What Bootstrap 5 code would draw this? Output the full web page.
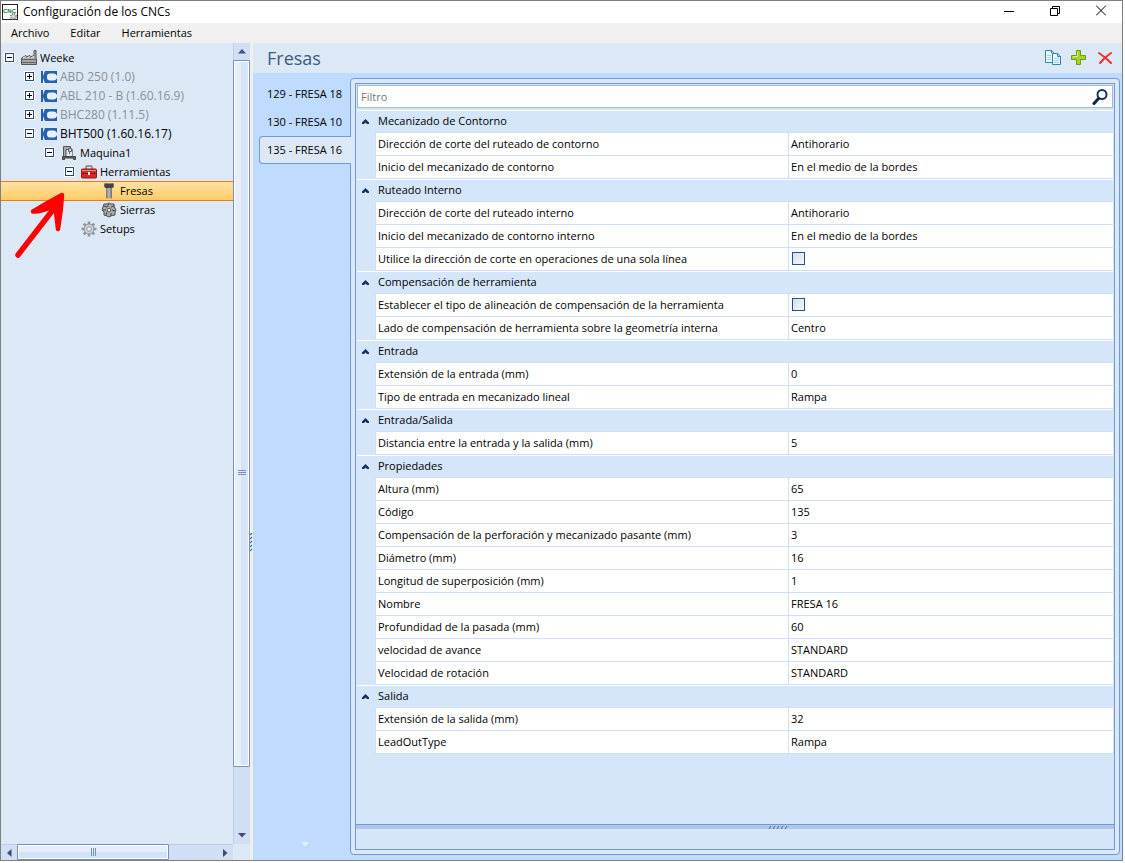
<!DOCTYPE html>
<html lang="es">
<head>
<meta charset="utf-8">
<meta name="viewport" content="width=device-width, initial-scale=1">
<title>Configuración de los CNCs</title>
<link href="https://cdn.jsdelivr.net/npm/bootstrap@5.3.0/dist/css/bootstrap.min.css" rel="stylesheet">
<style>
html, body { height: 100%; }
body { font-family: "Open Sans", "Noto Sans", sans-serif; font-size: 11px; line-height: 16px; color: #000; background: #fff; padding: 0 2px 2px 0; overflow: hidden; }
button { font: inherit; color: inherit; background: none; border: 0; padding: 0; }
svg { display: block; flex: none; }
.app-window { border: 1px solid #7f7f7f; }
.title-row { height: 22px; padding: 0 0 0 1px; gap: 5px; }
.title-row h1 { font-size: 12px; line-height: 16px; font-weight: 400; }
.win-btn { width: 46px; height: 18px; display: flex; align-items: center; justify-content: center; }
.win-btns { margin-right: -2px; }
.menu-row { height: 20px; background: #f0f0f0; padding-left: 10px; gap: 21px; }
.menu-row a { color: #000; text-decoration: none; }
.side { width: 249px; background: #dde8f6; display: grid; grid-template-columns: minmax(0, 1fr) 17px; grid-template-rows: minmax(0, 1fr) 16px; }
.tree { padding-top: 5px; }
.tree li { height: 19px; display: flex; align-items: center; padding-left: 3px; white-space: nowrap; }
.tree .lv1 { padding-left: 23px; font-size: 12px; }
.tree .lv2 { padding-left: 43px; }
.tree .lv3 { padding-left: 63px; }
.tree .lv4 { padding-left: 83px; }
.tree .expander, .tree .spacer { width: 11px; height: 11px; margin-right: 6px; }
.tree .node { margin-left: 3px; }
.tree .off { color: #8b8f96; }
.tree .chosen { height: 20px; margin-bottom: -1px; border: 1px solid #f07818; border-width: 1px 0; background: linear-gradient(#ffe3a3, #ffcb62); }
.pointer-arrow { left: 9px; top: 145px; }
.v-track { background: #d0dff3; border-left: 1px solid #bccfe9; }
.h-track { background: #d0dff3; border-top: 1px solid #bccfe9; }
.v-track button, .h-track button { display: flex; align-items: center; justify-content: center; }
.v-track > button { height: 17px; }
.h-track > button { width: 16px; }
.v-thumb { border: 1px solid #7590ba; box-shadow: inset 0 0 0 1px #fff; background: linear-gradient(90deg, #e7eefb 45%, #d3e2f4 45%, #dbe8f8); margin-left: -1px; flex: 706 0 0; border-radius: 1px; }
.v-thumb svg { margin-top: 118px; }
.v-rest { flex: 60 0 0; }
.h-thumb { border: 1px solid #7590ba; box-shadow: inset 0 0 0 1px #fff; background: linear-gradient(#e7eefb 50%, #d3e2f4 50%); flex: 152 0 0; margin-top: -1px; border-radius: 1px; }
.h-rest { flex: 48 0 0; }
.side-split { width: 3px; background: #efefef; padding-top: 180px; }
.work { background: #bfdbff; min-width: 0; }
.work-head { height: 30px; background: #dde8f6; padding: 0 9px 0 14px; }
.work-head h2 { font-size: 18px; line-height: 24px; font-weight: 400; color: #3b5a82; }
.work-body { padding: 5px 2px 5px 6px; min-height: 0; }
.tool-tabs { width: 92px; margin-right: -1px; z-index: 1; padding-top: 2px; }
.tool-tabs button { height: 28px; text-align: left; padding-left: 7px; border: 1px solid transparent; border-right: 0; white-space: nowrap; }
.tool-tabs .active { background: #dde8f6; border-color: #6f9ad6; border-radius: 4px 0 0 4px; }
.pane { background: #dde8f6; border: 1px solid #6f9ad6; border-radius: 4px; padding: 4px; min-width: 0; }
.pane-inner { border: 1px solid #6f9ad6; background: #d5e6fb; }
.filter-box { height: 23px; margin: 1px 1px 2px; background: #fff; border: 1px solid #9cbbe8; }
.filter-box input { border: 0; outline: 0; background: none; padding: 0 3px; min-width: 0; color: #000; }
.filter-box input::placeholder { color: #777; opacity: 1; }
.props { margin: 0 1px; table-layout: fixed; width: calc(100% - 2px); border-collapse: separate; border-spacing: 0; }
.props th, .props td { height: 23px; padding: 0 3px 0 2px; font-weight: 400; background: #fff; border-bottom: 1px solid #cfe0f5; white-space: nowrap; vertical-align: middle; line-height: 16px; color: #000; }
.props .gutter { background: #d5e6fb; border-bottom: 0; border-right: 1px solid #cfe0f5; }
.props td:last-child { border-left: 1px solid #cfe0f5; }
.props .cat th, .props .cat td { background: #d5e6fb; border-top: 1px solid #fff; border-right: 0; border-bottom: 1px solid #cfe0f5; }
.props .cat td { padding: 0 0 1px 4px; border-bottom: 0; }
.props .cat th { padding: 0 3px 1px 2px; }
.props input { appearance: none; width: 13px; height: 13px; border: 1px solid #1e558f; background: linear-gradient(135deg, #d8dce6, #f6f8fc); display: block; margin: 0 0 1px 1px; }
.pane-split { height: 5px; background: #b1c6e7; border-top: 1px solid #6f9ad6; padding-left: 86px; }
.pane-note { height: 20px; }
</style>
</head>
<body>
<svg width="0" height="0" class="position-absolute" aria-hidden="true">
  <defs>
    <linearGradient id="steel"><stop offset="0" stop-color="#555"/><stop offset=".5" stop-color="#bbb"/><stop offset="1" stop-color="#444"/></linearGradient>
  </defs>
  <symbol id="minus" viewBox="0 0 11 11"><rect x=".5" y=".5" width="10" height="10" fill="#fff" stroke="#fff"/><rect x="1.500" y="1.500" width="8" height="8" fill="#fff" stroke="#2b4878"/><path d="M3 5.500h5" stroke="#000"/></symbol>
  <symbol id="plus" viewBox="0 0 11 11"><rect x=".5" y=".5" width="10" height="10" fill="#fff" stroke="#fff"/><rect x="1.500" y="1.500" width="8" height="8" fill="#fff" stroke="#2b4878"/><path d="M3 5.500h5M5.500 3v5" stroke="#000"/></symbol>
  <symbol id="brand" viewBox="0 0 16 14"><path d="M0 1h2v5l2-5h12v12H4L2 8v5H0z" fill="#2762ad"/><rect x="6" y="3.500" width="9.500" height="7" rx="3" fill="#e8f0fa"/><path d="M14 5.500h2v3h-2z" fill="#e8f0fa"/></symbol>
  <symbol id="up" viewBox="0 0 9 6"><path d="M1 5V3.500L4.500 0 8 3.500V5H6L4.500 3.500 3 5z" fill="#12305f"/></symbol>
  <symbol id="gear" viewBox="0 0 16 16"><path d="M8 .5v15M.5 8h15M2.700 2.700l10.600 10.600M13.300 2.700L2.700 13.300" stroke="#8f949b" stroke-width="2.600"/><circle cx="8" cy="8" r="5" fill="#cfd2d6" stroke="#8f949b"/><circle cx="8" cy="8" r="2.300" fill="#eef2f6" stroke="#8f949b"/></symbol>
</svg>

<div class="app-window d-flex flex-column h-100">
  <header class="title-row d-flex align-items-center">
    <svg width="16" height="17" viewBox="0 0 16 17"><rect x=".5" y=".5" width="15" height="15" fill="#fff" stroke="#222"/><text x="1" y="9" font-family="Liberation Sans" font-weight="bold" font-size="6" fill="#147a32">CNC</text><circle cx="11.500" cy="12.500" r="2.500" fill="#ddd" stroke="#777" stroke-dasharray="1 1" stroke-width="2"/></svg>
    <h1 class="mb-0 me-auto">Configuración de los CNCs</h1>
    <div class="win-btns d-flex align-self-start">
    <button class="win-btn" aria-label="Minimizar"><svg width="10" height="11"><path d="M0 6.500h10" stroke="#000"/></svg></button>
    <button class="win-btn" aria-label="Restaurar"><svg width="10" height="11" fill="none" stroke="#000"><path d="M.5 3.500h7v7h-7zM2.500 3V1.500h7v7H8"/></svg></button>
    <button class="win-btn" aria-label="Cerrar"><svg width="10" height="11" stroke="#000"><path d="M0 .5l10 10M10 .5l-10 10"/></svg></button>
    </div>
  </header>
  <nav class="menu-row d-flex align-items-center" aria-label="Principal"><a href="#">Archivo</a><a href="#">Editar</a><a href="#">Herramientas</a></nav>

  <main class="d-flex flex-grow-1 overflow-hidden">
    <aside class="side position-relative flex-shrink-0">
      <ul class="tree list-unstyled mb-0 overflow-hidden">
        <li><button class="expander" aria-label="Contraer"><svg width="11" height="11"><use href="#minus"/></svg></button>
          <svg width="16" height="16" viewBox="0 0 16 16"><path d="M13 .5h2V8l.5 1v5.500H.5V8L5 5.500V7l4-1.500V7l4-1.500z" fill="#a6a6a6" stroke="#555"/><path d="M1 9.500h14M1 12.500h14" stroke="#666"/><path d="M2 8l3-1.500M6 8l3-1.500M10 8l3-1.500" stroke="#eee"/></svg><span class="node">Weeke</span></li>
        <li class="lv1 off"><button class="expander" aria-label="Expandir"><svg width="11" height="11"><use href="#plus"/></svg></button><svg width="16" height="14"><use href="#brand"/></svg><span class="node">ABD 250 (1.0)</span></li>
        <li class="lv1 off"><button class="expander" aria-label="Expandir"><svg width="11" height="11"><use href="#plus"/></svg></button><svg width="16" height="14"><use href="#brand"/></svg><span class="node">ABL 210 - B (1.60.16.9)</span></li>
        <li class="lv1 off"><button class="expander" aria-label="Expandir"><svg width="11" height="11"><use href="#plus"/></svg></button><svg width="16" height="14"><use href="#brand"/></svg><span class="node">BHC280 (1.11.5)</span></li>
        <li class="lv1"><button class="expander" aria-label="Contraer"><svg width="11" height="11"><use href="#minus"/></svg></button><svg width="16" height="14"><use href="#brand"/></svg><span class="node">BHT500 (1.60.16.17)</span></li>
        <li class="lv2"><button class="expander" aria-label="Contraer"><svg width="11" height="11"><use href="#minus"/></svg></button>
          <svg width="16" height="16" viewBox="0 0 16 16"><path d="M2.500 1.500h7v3H5v7H2.500z" fill="#aaa" stroke="#555"/><path d="M8.500 5v4" stroke="#666"/><path d="M7.500 3.500h3v3h-3z" fill="#ccc" stroke="#666"/><path d="M11.500 4v7" stroke="#888"/><path d="M1.500 14.500v-3h13v3h-2V13h-9v1.500z" fill="#666" stroke="#444"/></svg><span class="node">Maquina1</span></li>
        <li class="lv3"><button class="expander" aria-label="Contraer"><svg width="11" height="11"><use href="#minus"/></svg></button>
          <svg width="16" height="16" viewBox="0 0 16 16"><path d="M5 5V3q0-1 1-1h4q1 0 1 1v2" fill="none" stroke="#777" stroke-width="1.400"/><rect x=".5" y="5" width="15" height="9" rx="1" fill="#d42a2a" stroke="#a01414"/><path d="M1 6.500h14" stroke="#f08a80"/><path d="M1 9.500h14" stroke="#8c1010"/><path d="M7 8h2v3H7z" fill="#eee"/></svg><span class="node">Herramientas</span></li>
        <li class="lv4 chosen"><span class="spacer"></span><svg width="16" height="16" viewBox="0 0 16 16"><path d="M3.500 .5h9V4l-1.500 1v10.500H5V5L3.500 4z" fill="url(#steel)"/><path d="M3.500 .5h9V4l-1 1h-7l-1-1z" fill="#444"/></svg><span class="node">Fresas</span></li>
        <li class="lv4"><span class="spacer"></span><svg width="16" height="16" viewBox="0 0 16 16"><path d="M8 1l2 1 3 0 .3 3L15 8l-1 2v3l-3 .5L8 15l-2-1-3-1v-3L1 8l1-3 1-3h3z" fill="#a9a9a9" stroke="#4d4d4d"/><path d="M8 2L6 5M13 4l-3 1M14 9l-3-1M10 14V11M5 13l1-3M2 8l3 0M3 4l3 1" stroke="#444"/><circle cx="8" cy="8" r="1.800" fill="#eee" stroke="#555"/></svg><span class="node">Sierras</span></li>
        <li class="lv3"><span class="spacer"></span><svg width="16" height="16"><use href="#gear"/></svg><span class="node">Setups</span></li>
      </ul>
      <div class="v-track d-flex flex-column">
        <button aria-label="Subir"><svg width="8" height="5"><path d="M4 0l4 4.500H0z" fill="#3d5380"/></svg></button>
        <div class="v-thumb d-flex align-items-center justify-content-center"><svg width="8" height="7" stroke="#7290c0"><path d="M0 1.500h8M0 3.500h8M0 5.500h8"/></svg></div>
        <div class="v-rest"></div>
        <button aria-label="Bajar"><svg width="8" height="5"><path d="M0 0h8L4 4.500z" fill="#3d4a68"/></svg></button>
      </div>
      <div class="h-track d-flex">
        <button aria-label="Izquierda"><svg width="5" height="8"><path d="M4.500 0v8L0 4z" fill="#3d4a68"/></svg></button>
        <div class="h-thumb d-flex align-items-center justify-content-center"><svg width="7" height="8" stroke="#7290c0"><path d="M1.500 0v8M3.500 0v8M5.500 0v8"/></svg></div>
        <div class="h-rest"></div>
        <button aria-label="Derecha"><svg width="5" height="8"><path d="M0 0v8l4.500-4z" fill="#3d4a68"/></svg></button>
      </div>
      <svg class="pointer-arrow position-absolute" width="62" height="74" viewBox="0 0 62 74" aria-hidden="true"><path d="M8 67L42 23" stroke="#f00" stroke-width="5.500" stroke-linecap="round"/><path d="M52 7Q37 15 23 23.500Q31 24 41 19L46 24Q47 32 48 41Q51 24 52 7z" fill="#f00" stroke="#f00" stroke-width="4.500" stroke-linejoin="round"/></svg>
    </aside>
    <div class="side-split d-flex align-items-center"><svg width="3" height="18" viewBox="0 0 3 18"><path d="M0 2l2-2M0 6l2-2M0 10l2-2M0 14l2-2M0 18l2-2" stroke="#2b6cc4" stroke-width="1.200"/></svg></div>

    <section class="work d-flex flex-column flex-grow-1">
      <div class="work-head d-flex align-items-center">
        <h2 class="mb-0 me-auto">Fresas</h2>
        <div class="d-flex" style="gap:10px">
          <button aria-label="Copiar"><svg width="16" height="16" viewBox="0 0 16 16"><g fill="#eef8fd" stroke="#2b86b8"><path d="M.5 .5h6l3 3v9h-9z"/><path d="M7.500 3.500h5l3 3v8h-8z"/><path d="M12.500 3.500v3h3M6.500 .5v3" fill="none"/></g><path d="M2 5.500h4M2 7.500h4M2 9.500h4M9 8.500h5M9 10.500h5M9 12.500h5" stroke="#9ed2ea"/></svg></button>
          <button aria-label="Agregar"><svg width="16" height="16" viewBox="0 0 16 16"><path d="M5.500 .5h4v5h5v4h-5v5h-4v-5h-5v-4h5z" fill="#a4d428" stroke="#6f9c12" stroke-linejoin="round"/><path d="M6.500 2v4.500H2" fill="none" stroke="#d8f08a"/></svg></button>
          <button aria-label="Eliminar"><svg width="16" height="16" viewBox="0 0 16 16"><path d="M2 3q6 4 12 10M14 3Q8 7 3 13" fill="none" stroke="#f03030" stroke-width="2" stroke-linecap="round"/></svg></button>
        </div>
      </div>
      <div class="work-body d-flex flex-grow-1">
        <div class="tool-tabs d-flex flex-column position-relative flex-shrink-0" role="tablist">
          <button role="tab">129 - FRESA 18</button>
          <button role="tab">130 - FRESA 10</button>
          <button role="tab" class="active" aria-selected="true">135 - FRESA 16</button>
          <svg class="mt-auto mx-auto mb-2" width="8" height="5"><path d="M0 0h8L4 4.500z" fill="#e4effd"/></svg>
        </div>
        <div class="pane d-flex flex-grow-1">
          <div class="pane-inner d-flex flex-column flex-grow-1">
            <div class="filter-box d-flex align-items-center flex-shrink-0">
              <input class="flex-grow-1" type="text" placeholder="Filtro" aria-label="Filtro">
              <button class="me-1" aria-label="Buscar"><svg width="16" height="16" viewBox="0 0 16 16"><circle cx="10" cy="5.500" r="4.500" fill="#fff" stroke="#17365f" stroke-width="2"/><path d="M6.500 9.500l-4.500 5" stroke="#102548" stroke-width="3" stroke-linecap="round"/></svg></button>
            </div>
            <table class="props">
              <colgroup><col style="width:19px"><col style="width:54.500%"><col></colgroup>
              <tbody>
              <tr class="cat"><td><svg width="9" height="6"><use href="#up"/></svg></td><th colspan="2">Mecanizado de Contorno</th></tr>
              <tr><td class="gutter"></td><th scope="row">Dirección de corte del ruteado de contorno</th><td>Antihorario</td></tr>
              <tr><td class="gutter"></td><th scope="row">Inicio del mecanizado de contorno</th><td>En el medio de la bordes</td></tr>
              <tr class="cat"><td><svg width="9" height="6"><use href="#up"/></svg></td><th colspan="2">Ruteado Interno</th></tr>
              <tr><td class="gutter"></td><th scope="row">Dirección de corte del ruteado interno</th><td>Antihorario</td></tr>
              <tr><td class="gutter"></td><th scope="row">Inicio del mecanizado de contorno interno</th><td>En el medio de la bordes</td></tr>
              <tr><td class="gutter"></td><th scope="row"><label for="single">Utilice la dirección de corte en operaciones de una sola línea</label></th><td><input id="single" type="checkbox"></td></tr>
              <tr class="cat"><td><svg width="9" height="6"><use href="#up"/></svg></td><th colspan="2">Compensación de herramienta</th></tr>
              <tr><td class="gutter"></td><th scope="row"><label for="align">Establecer el tipo de alineación de compensación de la herramienta</label></th><td><input id="align" type="checkbox"></td></tr>
              <tr><td class="gutter"></td><th scope="row">Lado de compensación de herramienta sobre la geometría interna</th><td>Centro</td></tr>
              <tr class="cat"><td><svg width="9" height="6"><use href="#up"/></svg></td><th colspan="2">Entrada</th></tr>
              <tr><td class="gutter"></td><th scope="row">Extensión de la entrada (mm)</th><td>0</td></tr>
              <tr><td class="gutter"></td><th scope="row">Tipo de entrada en mecanizado lineal</th><td>Rampa</td></tr>
              <tr class="cat"><td><svg width="9" height="6"><use href="#up"/></svg></td><th colspan="2">Entrada/Salida</th></tr>
              <tr><td class="gutter"></td><th scope="row">Distancia entre la entrada y la salida (mm)</th><td>5</td></tr>
              <tr class="cat"><td><svg width="9" height="6"><use href="#up"/></svg></td><th colspan="2">Propiedades</th></tr>
              <tr><td class="gutter"></td><th scope="row">Altura (mm)</th><td>65</td></tr>
              <tr><td class="gutter"></td><th scope="row">Código</th><td>135</td></tr>
              <tr><td class="gutter"></td><th scope="row">Compensación de la perforación y mecanizado pasante (mm)</th><td>3</td></tr>
              <tr><td class="gutter"></td><th scope="row">Diámetro (mm)</th><td>16</td></tr>
              <tr><td class="gutter"></td><th scope="row">Longitud de superposición (mm)</th><td>1</td></tr>
              <tr><td class="gutter"></td><th scope="row">Nombre</th><td>FRESA 16</td></tr>
              <tr><td class="gutter"></td><th scope="row">Profundidad de la pasada (mm)</th><td>60</td></tr>
              <tr><td class="gutter"></td><th scope="row">velocidad de avance</th><td>STANDARD</td></tr>
              <tr><td class="gutter"></td><th scope="row">Velocidad de rotación</th><td>STANDARD</td></tr>
              <tr class="cat"><td><svg width="9" height="6"><use href="#up"/></svg></td><th colspan="2">Salida</th></tr>
              <tr><td class="gutter"></td><th scope="row">Extensión de la salida (mm)</th><td>32</td></tr>
              <tr><td class="gutter"></td><th scope="row">LeadOutType</th><td>Rampa</td></tr>
              </tbody>
            </table>
            <div class="pane-split mt-auto d-flex justify-content-center align-items-center flex-shrink-0"><svg width="20" height="3" viewBox="0 0 20 3"><path d="M1 3l2-3M5 3l2-3M9 3l2-3M13 3l2-3M17 3l2-3" stroke="#2b6cc4"/></svg></div>
            <div class="pane-note flex-shrink-0"></div>
          </div>
        </div>
      </div>
    </section>
  </main>
</div>
<script src="https://cdn.jsdelivr.net/npm/bootstrap@5.3.0/dist/js/bootstrap.bundle.min.js"></script>
</body>
</html>
